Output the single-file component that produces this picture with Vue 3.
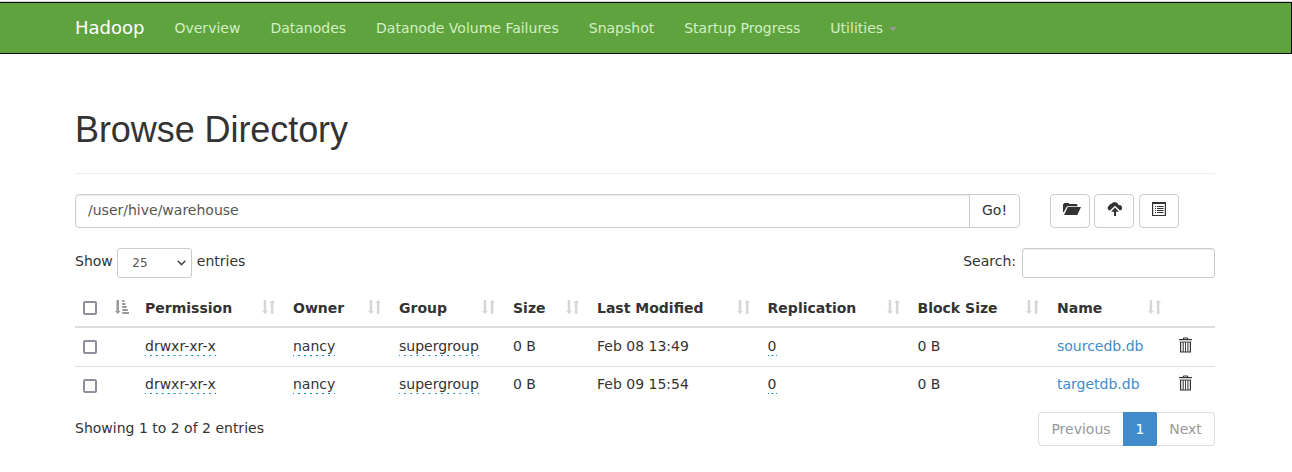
<script setup>
const nav = ['Overview', 'Datanodes', 'Datanode Volume Failures', 'Snapshot', 'Startup Progress']
const columns = [
  { label: 'Permission', w: 148 },
  { label: 'Owner', w: 106 },
  { label: 'Group', w: 114 },
  { label: 'Size', w: 84 },
  { label: 'Last Modified', w: 170.6 },
  { label: 'Replication', w: 149.9 },
  { label: 'Block Size', w: 139.5 },
  { label: 'Name', w: 122 },
]
const rows = [
  { time: 'Feb 08 13:49', name: 'sourcedb.db' },
  { time: 'Feb 09 15:54', name: 'targetdb.db' },
]
</script>

<template>
  <div class="page">
    <header class="navbar">
      <a class="brand">Hadoop</a>
      <a v-for="n in nav" :key="n" class="nav-link">{{ n }}</a>
      <a class="nav-link">Utilities<span class="caret"></span></a>
    </header>
    <main class="container">
      <h1>Browse Directory</h1>
      <div class="path-row">
        <div class="path-input">/user/hive/warehouse</div>
        <button class="go">Go!</button>
        <button class="icon-btn first">
          <svg width="18" height="14" viewBox="0 0 18 14"><path d="M0 10V2.500L1.500 1H5.500L6.500 2H13.500L14.500 3V4.300H4.300L3.500 5L.8 10z" /><path d="M4.800 5H18L14.300 13H1z" /></svg>
        </button>
        <button class="icon-btn second">
          <svg width="16" height="14" viewBox="0 0 16 14"><path d="M2.800 8.500A2.600 2.600 0 0 1 2.300 3.500A2 2 0 0 1 4.500 1.800A4 4 0 0 1 11.700 3.200A2.700 2.700 0 0 1 13 8.500L8 3.700L3 8.500z" /><path d="M8 5.500l3.900 4.200H9V14H7V9.700H4.100z" /></svg>
        </button>
        <button class="icon-btn third">
          <svg width="14" height="14" viewBox="0 0 14 14"><path fill-rule="evenodd" d="M0 0H14V14H0zM1.200 2V13H12.800V2z" /><path d="M3 4h1v1H3zM5 4h6.500v1H5zM3 6h1v1H3zM5 6h6.500v1H5zM3 8h1v1H3zM5 8h6.500v1H5zM3 10h1v1H3zM5 10h6.500v1H5z" /></svg>
        </button>
      </div>
      <div class="controls">
        <label>Show</label>
        <div class="select">25<svg width="9" height="6" viewBox="0 0 9 6"><path d="M.7.8l3.800 3.800L8.300.8" fill="none" stroke="#444" stroke-width="1.500" /></svg></div>
        <label>entries</label>
        <label class="search-label">Search:</label>
        <div class="search"></div>
      </div>
      <table>
        <colgroup>
          <col class="check-col" />
          <col v-for="c in columns" :key="c.label" :style="{ width: c.w + 'px' }" />
          <col />
        </colgroup>
        <thead>
          <tr>
            <th><div class="th"><span class="box"></span>
              <svg class="sort asc" width="14" height="14" viewBox="0 0 14 14"><path d="M1.500 0H4V11H5.500L2.800 14L0 11H1.500zM7.200 0H9.500V2H7.200zM7.200 3H10.500V5H7.200zM7.200 6H11.700V8H7.200zM7.200 9H12.800V11H7.200zM7.200 12H14V14H7.200z" /></svg>
            </div></th>
            <th v-for="c in columns" :key="c.label"><div class="th">{{ c.label }}
              <svg class="sort" width="14" height="14" viewBox="0 0 14 14"><path d="M1.700 0H4.200V11H5.900L3 14L0 11H1.700zM8.900 14H11.400V3H13.100L10.200 0L7.300 3H8.900z" /></svg>
            </div></th>
            <th></th>
          </tr>
        </thead>
        <tbody>
          <tr v-for="r in rows" :key="r.name">
            <td><span class="box"></span></td>
            <td><span class="edit">drwxr-xr-x</span></td>
            <td><span class="edit">nancy</span></td>
            <td><span class="edit">supergroup</span></td>
            <td>0 B</td>
            <td>{{ r.time }}</td>
            <td><span class="edit">0</span></td>
            <td>0 B</td>
            <td><a class="link">{{ r.name }}</a></td>
            <td><svg class="trash" width="13" height="16" viewBox="0 0 13 16"><path fill-rule="evenodd" d="M3.500 2L4.500 .5h4L9.500 2H13v1H0V2zM5 2h3v-.6H5z" /><path d="M.5 3.500h12V5H.5z" opacity=".4" /><path fill-rule="evenodd" d="M1 5h11v10.500H1zM2.200 5.500v9h1.500v-9zM4.700 5.500v9H6.100v-9zM7 5.500v9h1.400v-9zM9.400 5.500v9h1.400v-9z" /></svg></td>
          </tr>
        </tbody>
      </table>
      <div class="footer">
        <span>Showing 1 to 2 of 2 entries</span>
        <div class="pager"><a class="prev">Previous</a><a class="active">1</a><a class="next">Next</a></div>
      </div>
    </main>
  </div>
</template>

<style>
body { background: #fff; }
</style>

<style scoped>
* { box-sizing: border-box; }
.page { height: 472px; overflow: hidden; border-top: 1px solid #fff; font: 14px/20px "DejaVu Sans", sans-serif; color: #333; }
.navbar { height: 52px; margin-top: 1px; border: 1px solid #080808; border-left: 0; background: #5fa33e; display: flex; align-items: center; padding: 0 0 0 75px; box-shadow: 0 -1px 0 #d4d4d4; }
.brand { color: #fff; font-size: 18px; margin-right: 15px; }
.nav-link { color: #d2efc3; padding: 0 15px; white-space: nowrap; }
.caret { display: inline-block; margin-left: 6px; border: 4px solid transparent; border-top-color: #999; border-bottom: 0; vertical-align: middle; }
.container { width: 1140px; margin: 0 0 0 75px; }
h1 { font: 400 36px/40px "Liberation Sans", Arial, sans-serif; letter-spacing: -.07px; margin: 0; padding: 56px 0 23px; height: 120px; border-bottom: 1px solid #eee; }
.path-row { display: flex; margin-top: 20px; height: 34px; }
.path-input { width: 895px; border: 1px solid #ccc; border-radius: 4px 0 0 4px; padding: 5px 12px; color: #555; box-shadow: inset 0 1px 1px rgba(0,0,0,.075); }
button { font: inherit; color: #333; background: #fff; border: 1px solid #ccc; padding: 0; }
.go { width: 51px; margin-left: -1px; border-radius: 0 4px 4px 0; padding-bottom: 2px; }
.icon-btn { width: 40px; border-radius: 4px; display: flex; align-items: center; justify-content: center; padding-bottom: 4px; }
.icon-btn svg { fill: #333; }
.first { margin-left: 30px; }
.first svg { margin-left: 3px; }
.second { margin-left: 4px; }
.second svg { margin-left: 1px; }
.third { margin-left: 5px; }
.controls { display: flex; margin-top: 20px; height: 30px; }
.controls label { padding-top: 3px; }
.select { width: 75px; height: 30px; margin: 0 5px 0 4px; border: 1px solid #ccc; border-radius: 3px; padding: 0 5px 0 14.5px; font-size: 12px; line-height: 29px; color: #555; display: flex; justify-content: space-between; align-items: center; }
.search-label { margin-left: auto; }
.search { width: 193px; height: 30px; margin-left: 6px; border: 1px solid #ccc; border-radius: 3px; box-shadow: inset 0 1px 1px rgba(0,0,0,.075); }
table { width: 1140px; table-layout: fixed; border-collapse: separate; border-spacing: 0; margin-top: 10px; }
.check-col { width: 62px; }
th { height: 40px; padding: 2px 8px 0; text-align: left; border-bottom: 2px solid #ddd; vertical-align: middle; }
.th { display: flex; align-items: center; justify-content: space-between; white-space: nowrap; height: 20px; }
.sort { fill: #d6d6d6; margin-top: -2px; margin-right: .6px; }
.sort.asc { fill: #999; margin-right: 0; }
.box { display: block; width: 14px; height: 14px; border: 2px solid #8f8f9d; border-radius: 2px; }
td { height: 38px; padding: 0 8px 4px; vertical-align: middle; white-space: nowrap; }
tbody tr:first-child td { height: 39px; padding-bottom: 2px; border-bottom: 1px solid #ddd; }
tbody td:first-child { padding-bottom: 1px; }
tbody tr:first-child td:first-child { padding-bottom: 0; }
.edit { padding-bottom: 2px; background: linear-gradient(90deg, #08c 1px, transparent 1px, transparent calc(100% - 1px), #08c calc(100% - 1px)) 0 100% / 6px 1px; background-repeat: round no-repeat; }
.link { color: #428bca; }
.trash { display: block; fill: #333; margin-top: -3px; }
.footer { display: flex; justify-content: space-between; margin-top: 7px; }
.footer span { padding-top: 6px; }
.pager { display: flex; height: 34px; line-height: 32px; color: #999; }
.pager a { border: 1px solid #ddd; text-align: center; }
.pager .prev { width: 86px; border-radius: 4px 0 0 4px; }
.pager .active { width: 34px; background: #428bca; color: #fff; border-color: #428bca; margin-left: -1px; }
.pager .next { width: 59px; margin-left: -1px; padding-left: 1px; border-left: 0; border-radius: 0 4px 4px 0; }
</style>
